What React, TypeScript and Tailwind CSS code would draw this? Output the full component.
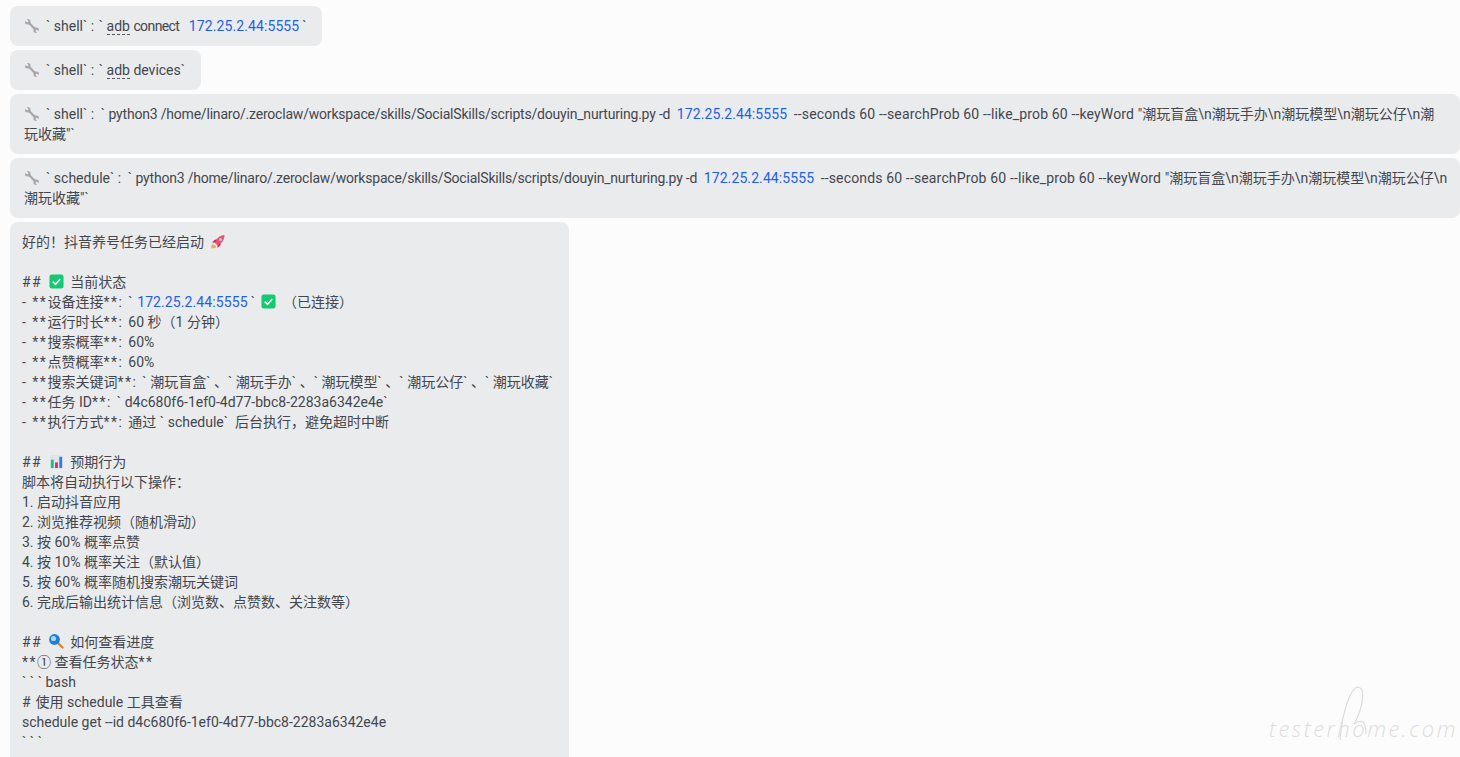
import type { ReactNode } from "react"

const font = "[font-family:'Roboto','Noto_Sans_CJK_SC',sans-serif] [font-variant-ligatures:none]"

function WrenchIcon() {
  const head = "M1 3 L3.3 4.6 L4.6 3.3 L3 1 C4.8 0.5 6.6 1.6 6.6 3.4 L6.2 5 L5 6.2 L3.4 6.6 C1.6 6.6 0.5 4.8 1 3 Z"
  return (
    <svg viewBox="0 0 16 16" className="inline-block w-[16px] h-[16px] align-[-3px] mr-[6px]" fill="#a9a3ab">
      <path d={head} />
      <path d={head} transform="rotate(180 8 8)" />
      <path d="M4.6 5.8 L5.8 4.6 L11.4 10.2 L10.2 11.4 Z" stroke="#a9a3ab" strokeWidth="0.8" />
    </svg>
  )
}

function CheckBox() {
  return (
    <svg viewBox="0 0 16 16" className="inline-block w-[15px] h-[15px] align-[-2px] mx-[3px]">
      <rect x="0.5" y="0.5" width="15" height="15" rx="2.5" fill="#13c971" />
      <path d="M4 8.2 L7 11 L12 5.4" fill="none" stroke="#fff" strokeWidth="1.7" />
    </svg>
  )
}

function Rocket() {
  return (
    <svg viewBox="0 0 16 16" className="inline-block w-[16px] h-[16px] align-[-3px] mx-[3px]">
      <path d="M2 10 L1 14.5 L5.5 14 L6 12 Z" fill="#f2a36b" />
      <path d="M4.5 8.5 C6 4.5 10 1.5 14.5 1 C14.5 6 11.5 10 7.5 11.5 Z" fill="#f0506f" />
      <path d="M4.5 8.5 L2 8.5 L5 5.4 L7 6 Z M7.5 11.5 L7.5 14 L10.6 11 L10 9 Z" fill="#d81f4d" />
      <circle cx="10.5" cy="5.5" r="1.5" fill="#9fd3ea" />
    </svg>
  )
}

function BarChart() {
  return (
    <svg viewBox="0 0 16 16" className="inline-block w-[15px] h-[15px] align-[-2px] mx-[3px]">
      <rect x="1" y="1" width="14" height="14" rx="1" fill="#dfe3ea" />
      <rect x="2" y="6" width="3" height="9" fill="#14c47c" />
      <rect x="6.5" y="9" width="3" height="6" fill="#e8207f" />
      <rect x="11" y="3" width="3" height="12" fill="#2f7fd8" />
    </svg>
  )
}

function Magnifier() {
  return (
    <svg viewBox="0 0 16 16" className="inline-block w-[16px] h-[16px] align-[-2px] mx-[2.5px]">
      <path d="M10.5 10.5 L14.5 14.5" stroke="#d8892e" strokeWidth="2.4" strokeLinecap="round" />
      <circle cx="6.5" cy="6.5" r="5.4" fill="#1f7fd6" />
      <circle cx="5.5" cy="5.5" r="2.6" fill="#a6d6f5" />
    </svg>
  )
}

function Ip({ className }: { className?: string }) {
  return <span className={`text-[#1f5fe8] mx-[3px] tracking-[0.1px] ${className ?? ""}`}>172.25.2.44:5555</span>
}

function Adb() {
  return <span className="border-b border-dashed border-[#55595f] leading-[15px] inline-block">adb</span>
}

// the source font sets `, *, # and the colon wider than Roboto does
function Md({ text }: { text: string }) {
  return (
    <>
      {text.split(/(`+|[*#]+|: |^- )/).map((part, i) => {
        if (part.startsWith("`")) return <span key={i} className="tracking-[3.5px]">{part}</span>
        if (part.startsWith("*") || part.startsWith("#")) return <span key={i} className="tracking-[1.5px]">{part}</span>
        if (part === ": " || part === "- ") return <span key={i} className="mr-[3px]">{part}</span>
        return part
      })}
    </>
  )
}

function ToolBubble({ children, fit }: { children: ReactNode; fit?: boolean }) {
  return (
    <div className={`${fit ? "w-fit" : "w-full"} bg-[#eaebed] rounded-[8px] pl-[14px] pr-[12px] py-[10px] break-all`}>
      <WrenchIcon />
      {children}
    </div>
  )
}

function ShellHead() {
  return (
    <>
      <span className="tracking-[3.5px]">`</span>shell<span className="tracking-[3.5px]">`</span>
      <span className="mr-[1px]">: </span>
      <span className="tracking-[3.5px]">`</span>
    </>
  )
}

const cmdPath = "python3 /home/linaro/.zeroclaw/workspace/skills/SocialSkills/scripts/douyin_nurturing.py -d"
const cmdArgs = "--seconds 60 --searchProb 60 --like_prob 60 --keyWord "
const cmdWords = "\"潮玩盲盒\\n潮玩手办\\n潮玩模型\\n潮玩公仔\\n潮玩收藏\""

const lines: ReactNode[] = [
  <>{"好的\uFF01抖音养号任务已经启动 "}<Rocket /></>,
  "",
  <><Md text="##" /> <CheckBox /> 当前状态</>,
  <><Md text="- **设备连接**: `" /><Ip className="ml-[1px]" /><Md text="`" /><CheckBox /> {"\uFF08已连接\uFF09"}</>,
  <Md text={"- **运行时长**: 60 秒\uFF081 分钟\uFF09"} />,
  <Md text="- **搜索概率**: 60%" />,
  <Md text="- **点赞概率**: 60%" />,
  <Md text="- **搜索关键词**: `潮玩盲盒`、`潮玩手办`、`潮玩模型`、`潮玩公仔`、`潮玩收藏`" />,
  <Md text="- **任务 ID**: `d4c680f6-1ef0-4d77-bbc8-2283a6342e4e`" />,
  <Md text={"- **执行方式**: 通过 `schedule` 后台执行\uFF0C避免超时中断"} />,
  "",
  <><Md text="##" /> <BarChart /> 预期行为</>,
  "脚本将自动执行以下操作\uFF1A",
  "1. 启动抖音应用",
  "2. 浏览推荐视频\uFF08随机滑动\uFF09",
  "3. 按 60% 概率点赞",
  "4. 按 10% 概率关注\uFF08默认值\uFF09",
  "5. 按 60% 概率随机搜索潮玩关键词",
  "6. 完成后输出统计信息\uFF08浏览数、点赞数、关注数等\uFF09",
  "",
  <><Md text="##" /> <Magnifier /> 如何查看进度</>,
  <Md text="**① 查看任务状态**" />,
  <Md text="```bash" />,
  <Md text="# 使用 schedule 工具查看" />,
  "schedule get --id d4c680f6-1ef0-4d77-bbc8-2283a6342e4e",
  <Md text="```" />,
  "",
]

export default function App() {
  return (
    <div className={`relative h-screen overflow-hidden bg-[#fcfcfd] text-[#43474d] text-[14px] leading-[20px] pt-[6px] pl-[10px] ${font}`}>
      <div className="flex flex-col gap-[4px]">
        <ToolBubble fit><ShellHead /><Adb /> <span className="tracking-[-0.6px] mr-[3px]">connect</span> <Ip /><Md text="`" /></ToolBubble>
        <ToolBubble fit><ShellHead /><Adb /> devices<Md text="`" /></ToolBubble>
        <ToolBubble>
          <Md text="`shell`: `" /><span className="tracking-[-0.2px]">{cmdPath}</span> <Ip /> <span className="tracking-[0.15px]">{cmdArgs}</span>{cmdWords}<Md text="`" />
        </ToolBubble>
        <ToolBubble>
          <Md text="`schedule`: `" /><span className="tracking-[-0.2px]">{cmdPath}</span> <Ip /> <span className="tracking-[0.15px]">{cmdArgs}</span>{cmdWords}<Md text="`" />
        </ToolBubble>
        <div className="w-[559px] bg-[#eaebed] rounded-[8px] px-[12px] py-[10px]">
          {lines.map((line, i) => (
            <div key={i} className="h-[20px] whitespace-nowrap">{line}</div>
          ))}
        </div>
      </div>
      {/* watermark */}
      <div className="absolute right-[2px] bottom-[16px] text-[22px] leading-[26px] tracking-[2.5px] text-[#dcdcdc] font-light italic [font-family:'Open_Sans',sans-serif]">
        testerhome.com
      </div>
      <svg viewBox="0 0 40 60" className="absolute left-[1336px] top-[684px] w-[40px] h-[60px]" fill="none" stroke="#dcdcdc" strokeWidth="1.2">
        <path d="M4 56 C6 30 14 4 22 3 C30 4 27 24 18 40 C26 34 30 38 30 50" />
      </svg>
    </div>
  )
}
